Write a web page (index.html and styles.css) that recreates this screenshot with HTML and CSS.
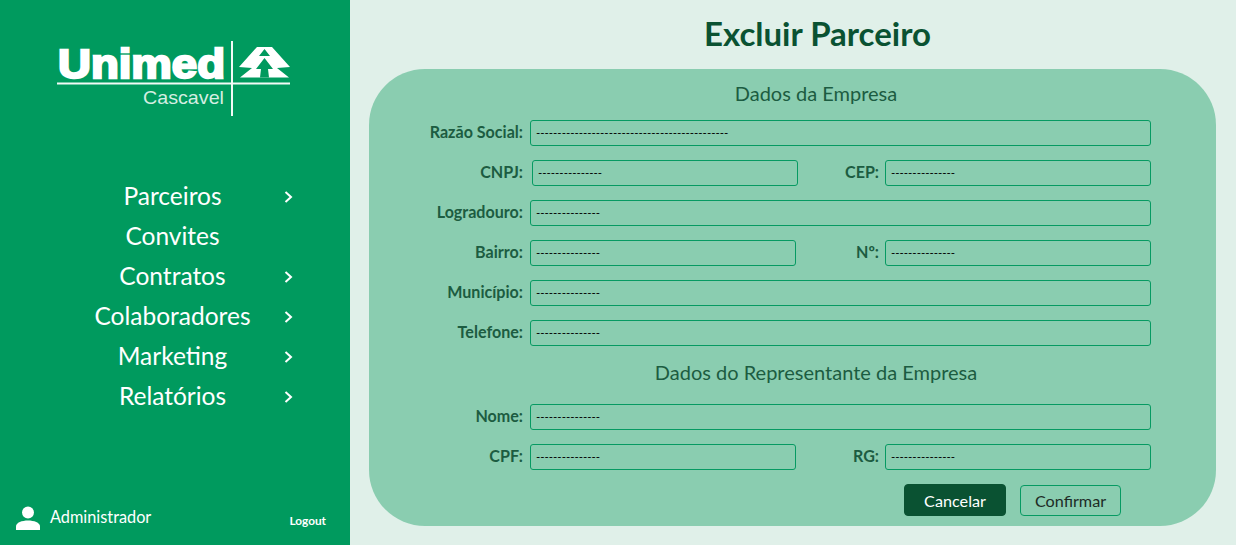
FILE: index.html
```html
<!DOCTYPE html>
<html lang="pt-BR">
<head>
<meta charset="utf-8">
<title>Excluir Parceiro</title>
<link rel="stylesheet" href="styles.css">
</head>
<body>
<div class="app">
  <aside class="sidebar">
    <div class="logo-wrap">
      <svg class="logo" width="240" height="80" viewBox="0 0 240 80">
        <text x="3" y="36.500" class="logo-word" textLength="167" lengthAdjust="spacingAndGlyphs">Unimed</text>
        <rect x="2" y="41.500" width="233" height="2" fill="#f2faf6"/>
        <rect x="176" y="0" width="2" height="75" fill="#f2faf6"/>
        <text x="88" y="63" class="logo-city" textLength="81" lengthAdjust="spacingAndGlyphs">Cascavel</text>
        <path fill="#fff" d="M202 6 H217 L235 26 L222 27 L234 36.500 H185 L197 27 L184 26 Z"/>
        <path fill="#009a5e" d="M209.500 8 L215 15 H204 Z M209.500 17 L218 28 H213 L214 36.500 H205 L206 28 H201 Z"/>
      </svg>
    </div>
    <nav class="menu">
      <a class="menu-item"><span class="menu-label">Parceiros</span><svg class="chev" width="10" height="14" viewBox="0 0 10 14"><path d="M2.500 2 L8 7 L2.500 12" fill="none" stroke="#fff" stroke-width="2"/></svg></a>
      <a class="menu-item"><span class="menu-label">Convites</span></a>
      <a class="menu-item"><span class="menu-label">Contratos</span><svg class="chev" width="10" height="14" viewBox="0 0 10 14"><path d="M2.500 2 L8 7 L2.500 12" fill="none" stroke="#fff" stroke-width="2"/></svg></a>
      <a class="menu-item"><span class="menu-label">Colaboradores</span><svg class="chev" width="10" height="14" viewBox="0 0 10 14"><path d="M2.500 2 L8 7 L2.500 12" fill="none" stroke="#fff" stroke-width="2"/></svg></a>
      <a class="menu-item"><span class="menu-label">Marketing</span><svg class="chev" width="10" height="14" viewBox="0 0 10 14"><path d="M2.500 2 L8 7 L2.500 12" fill="none" stroke="#fff" stroke-width="2"/></svg></a>
      <a class="menu-item"><span class="menu-label">Relatórios</span><svg class="chev" width="10" height="14" viewBox="0 0 10 14"><path d="M2.500 2 L8 7 L2.500 12" fill="none" stroke="#fff" stroke-width="2"/></svg></a>
    </nav>
    <div class="user-bar">
      <svg class="user-icon" width="24" height="24" viewBox="0 0 24 24"><circle cx="12" cy="6.500" r="6" fill="#fff"/><path fill="#fff" d="M0 24 V20.500 C0 16.500 6 14.500 12 14.500 S24 16.500 24 20.500 V24 Z"/></svg>
      <span class="user-name">Administrador</span>
      <a class="logout">Logout</a>
    </div>
  </aside>
  <main class="content">
    <h1 class="title">Excluir Parceiro</h1>
    <section class="panel">
      <h2 class="section-title">Dados da Empresa</h2>
      <div class="row"><label class="lbl">Razão Social:</label><div class="field">---------------------------------------------</div></div>
      <div class="row"><label class="lbl">CNPJ:</label><div class="field half cnpj">---------------</div><label class="lbl lbl2">CEP:</label><div class="field half">---------------</div></div>
      <div class="row"><label class="lbl">Logradouro:</label><div class="field">---------------</div></div>
      <div class="row"><label class="lbl">Bairro:</label><div class="field half">---------------</div><label class="lbl lbl2">Nº:</label><div class="field half">---------------</div></div>
      <div class="row"><label class="lbl">Município:</label><div class="field">---------------</div></div>
      <div class="row"><label class="lbl">Telefone:</label><div class="field">---------------</div></div>
      <h2 class="section-title second">Dados do Representante da Empresa</h2>
      <div class="row"><label class="lbl">Nome:</label><div class="field">---------------</div></div>
      <div class="row"><label class="lbl">CPF:</label><div class="field half">---------------</div><label class="lbl lbl2">RG:</label><div class="field half">---------------</div></div>
      <div class="actions">
        <button class="btn btn-dark">Cancelar</button>
        <button class="btn btn-outline">Confirmar</button>
      </div>
    </section>
  </main>
</div>
</body>
</html>
```
FILE: styles.css
```css
* { box-sizing: border-box; }
html, body { margin: 0; height: 100%; }
body { font-family: Lato, "Open Sans", sans-serif; background: #e0f0e9; overflow: hidden; }
.app { display: flex; height: 545px; }

.sidebar { width: 350px; flex: none; background: #009a5e; display: flex; flex-direction: column; color: #fff; padding-top: 41px; }
.logo-wrap { padding-left: 55px; height: 134px; }
.logo { display: block; }
.logo-word { font-family: "Liberation Sans", sans-serif; font-weight: 700; font-size: 40px; fill: #fff; stroke: #fff; stroke-width: 2.300px; }
.logo-city { font-family: "Liberation Sans", sans-serif; font-size: 19px; fill: #d5eee2; }

.menu { display: flex; flex-direction: column; }
.menu-item { height: 40px; display: flex; align-items: center; position: relative; justify-content: center; padding-right: 5px; }
.menu-label { font-size: 24.500px; line-height: 40px; margin-top: 2px; }
.chev { position: absolute; left: 283px; top: 15px; }

.user-bar { margin-top: auto; height: 56px; display: flex; align-items: flex-start; padding: 17px 0 0 16px; }
.user-name { font-size: 16.300px; line-height: 20px; margin: 1px 0 0 10px; }
.logout { font-size: 11.800px; font-weight: 700; margin-left: auto; margin-right: 24px; margin-top: 7px; line-height: 16px; }

.content { flex: 1; padding-right: 20px; padding-left: 19px; display: flex; flex-direction: column; }
.title { margin: 0; height: 69px; padding-left: 50px; font-size: 33px; font-weight: 700; color: #0a5232; text-align: center; line-height: 67px; }
.panel { width: 847px; height: 457px; background: #8acdb0; border-radius: 56px; padding: 11px 65px 0 0; display: flex; flex-direction: column; }
.section-title { margin: 0 0 14px; height: 26px; font-size: 20px; line-height: 26px; font-weight: 400; color: #1c5c41; text-align: center; padding-left: 112px; }
.section-title.second { margin: -1px 0 19px; height: 26px; }
.row { height: 26px; margin-bottom: 14px; display: flex; align-items: center; }
.lbl { width: 154px; flex: none; text-align: right; font-size: 16.100px; line-height: 24px; padding-bottom: 2px; font-weight: 700; color: #1c5c41; white-space: nowrap; }
.lbl2 { width: 83px; }
.field { flex: 1; margin-left: 7px; height: 26px; border: 1px solid #069a62; border-radius: 3px; font-size: 11.500px; line-height: 24px; color: #000; padding-left: 5px; }
.field.half { flex: none; width: 266px; }
.field.cnpj { margin-left: 9px; margin-right: -2px; }
.lbl2 + .field { margin-left: 6px; }
.actions { display: flex; justify-content: flex-end; gap: 14px; padding-right: 30px; align-items: flex-end; height: 32px; }
.btn { font-family: Lato, sans-serif; font-size: 16.200px; border-radius: 4px; padding: 0; }
.btn-dark { width: 102px; height: 32px; background: #0a5232; color: #fff; border: 1px solid #0a5232; }
.btn-outline { width: 101px; height: 31px; background: transparent; color: #1d2b26; border: 1px solid #069a62; }
```
